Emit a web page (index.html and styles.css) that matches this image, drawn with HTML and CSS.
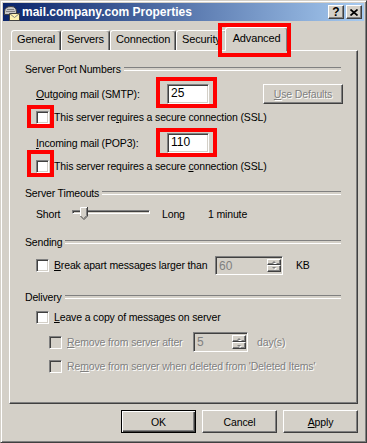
FILE: index.html
```html
<!DOCTYPE html>
<html>

<head>
    <title>mail.company.com Properties</title>
    <link rel="stylesheet" href="styles.css">
</head>

<body>
    <div class="window">
        <!-- Title bar -->
        <div class="titlebar">
            <svg class="app-icon" width="17" height="17" viewBox="0 0 17 17">
                <path d="M1.5 10.5V8Q1.5 2.5 8 2.5Q13.5 2.5 13.5 8V10.5Z" fill="#c8c8c8" stroke="#404040" />
                <path d="M4 5.5H11M3 7.5H12" stroke="#808080" />
                <rect x="6.5" y="9.5" width="10" height="7" fill="#fff4b0" stroke="#404040" />
                <path d="M6.5 9.5L11.5 13.5L16.5 9.5" fill="none" stroke="#808080" />
            </svg>
            <span class="title">mail.company.com Properties</span>
            <div class="caption-buttons">
                <span class="caption-btn">?</span>
                <span class="caption-btn">
                    <svg width="8" height="7" viewBox="0 0 8 7">
                        <path d="M0.5 0.5L7.5 6.5M7.5 0.5L0.5 6.5" stroke="#000" stroke-width="1.7" />
                    </svg>
                </span>
            </div>
        </div>

        <div class="dialog">
            <div class="tabs">
                <div class="tab">General</div>
                <div class="tab">Servers</div>
                <div class="tab">Connection</div>
                <div class="tab">Security</div>
                <div class="tab active">Advanced</div>
            </div>

            <div class="panel">
                <!-- Server Port Numbers -->
                <div class="group-title">Server Port Numbers</div>
                <div class="row row-field gap-7">
                    <span class="field-label"><u>O</u>utgoing mail (SMTP):</span>
                    <span class="field port">25</span>
                    <span class="button disabled use-defaults"><u>U</u>se Defaults</span>
                </div>
                <div class="row gap-6">
                    <span class="check"></span>
                    <span>This server re<u>q</u>uires a secure connection (SSL)</span>
                </div>
                <div class="row row-field gap-8">
                    <span class="field-label"><u>I</u>ncoming mail (POP3):</span>
                    <span class="field port">110</span>
                </div>
                <div class="row gap-6">
                    <span class="check"></span>
                    <span>This server requires a secure <u>c</u>onnection (SSL)</span>
                </div>

                <!-- Server Timeouts -->
                <div class="group-title gap-13">Server Timeouts</div>
                <div class="row row-slider gap-5">
                    <span class="slider-label">Short</span>
                    <div class="slider">
                        <div class="track"></div>
                        <svg class="thumb" width="8" height="13" viewBox="0 0 8 13">
                            <path d="M0 0H8V9L4 13L0 9Z" fill="#d4d0c8" />
                            <path d="M0.5 9V0.5H7" stroke="#fff" fill="none" />
                            <path d="M7.5 0V9L4 12.5L0.5 9" stroke="#404040" fill="none" />
                            <path d="M6.5 1V8.6L4 11.1" stroke="#808080" fill="none" />
                        </svg>
                    </div>
                    <span class="slider-long">Long</span>
                    <span>1 minute</span>
                </div>

                <!-- Sending -->
                <div class="group-title gap-12">Sending</div>
                <div class="row row-spin gap-6">
                    <span class="check"></span>
                    <span class="break-label"><u>B</u>reak apart messages larger than</span>
                    <span class="field spin disabled kb-spin">
                        <span class="spin-value">60</span>
                        <span class="spin-arrows">
                            <span class="spin-btn"><span class="arrow up"></span></span>
                            <span class="spin-btn"><span class="arrow down"></span></span>
                        </span>
                    </span>
                    <span class="unit-kb">KB</span>
                </div>

                <!-- Delivery -->
                <div class="group-title gap-15">Delivery</div>
                <div class="row gap-6">
                    <span class="check"></span>
                    <span><u>L</u>eave a copy of messages on server</span>
                </div>
                <div class="row row-spin sub disabled-text gap-8">
                    <span class="check disabled"></span>
                    <span class="remove-label"><u>R</u>emove from server after</span>
                    <span class="field spin disabled day-spin">
                        <span class="spin-value">5</span>
                        <span class="spin-arrows">
                            <span class="spin-btn"><span class="arrow up"></span></span>
                            <span class="spin-btn"><span class="arrow down"></span></span>
                        </span>
                    </span>
                    <span class="unit-days">day(s)</span>
                </div>
                <div class="row sub disabled-text gap-7">
                    <span class="check disabled"></span>
                    <span>Re<u>m</u>ove from server when deleted from 'Deleted Items'</span>
                </div>
            </div>

            <div class="buttons">
                <span class="button default">OK</span>
                <span class="button">Cancel</span>
                <span class="button"><u>A</u>pply</span>
            </div>
        </div>

        <!-- Red annotation boxes -->
        <div class="mark mark-tab"></div>
        <div class="mark mark-smtp"></div>
        <div class="mark mark-ssl1"></div>
        <div class="mark mark-pop3"></div>
        <div class="mark mark-ssl2"></div>
    </div>
</body>

</html>
```

FILE: styles.css
```css
* {
    margin: 0;
    padding: 0;
    box-sizing: border-box;
}

body {
    font-family: 'Liberation Sans', Arial, sans-serif;
    font-size: 10.5px;
    letter-spacing: -0.15px;
    color: #000000;
    background-color: #d4d0c8;
}

u {
    text-decoration: underline;
    text-underline-offset: 1px;
}

.window {
    position: relative;
    width: 367px;
    height: 443px;
    background: #d4d0c8;
    border: 1px solid;
    border-color: #d4d0c8 #404040 #404040 #d4d0c8;
    box-shadow: inset 1px 1px #ffffff, inset -1px -1px #808080;
    padding: 2px;
}

/* Title bar */
.titlebar {
    height: 18px;
    display: flex;
    align-items: center;
    padding: 0 2px 0 0;
    background: linear-gradient(to right, #0a246a, #a6caf0);
    color: #ffffff;
}

.app-icon {
    flex: none;
    margin-right: 2px;
}

.title {
    font-size: 12px;
    font-weight: bold;
    letter-spacing: 0;
}

.caption-buttons {
    margin-left: auto;
    display: flex;
    gap: 2px;
}

.caption-btn {
    width: 16px;
    height: 14px;
    display: flex;
    align-items: center;
    justify-content: center;
    background: #d4d0c8;
    color: #000000;
    font-size: 12px;
    font-weight: bold;
    letter-spacing: 0;
    border: 1px solid;
    border-color: #ffffff #404040 #404040 #ffffff;
    box-shadow: inset -1px -1px #808080;
}

/* Dialog body */
.dialog {
    padding: 6px 6px 0 6px;
}

.tabs {
    height: 23px;
    display: flex;
    align-items: flex-end;
    padding-left: 2px;
}

.tab {
    height: 20px;
    padding: 0 5px;
    line-height: 17px;
    font-size: 11px;
    border: 1px solid;
    border-bottom: none;
    border-color: #ffffff #404040 #404040 #ffffff;
    border-radius: 3px 3px 0 0;
    box-shadow: inset -1px 0 #808080;
    background: #d4d0c8;
}

.tab.active {
    position: relative;
    z-index: 1;
    height: 24px;
    margin: 0 -2px -1px -2px;
    padding: 0 7px;
    line-height: 20px;
}

.panel {
    height: 354px;
    border: 1px solid;
    border-color: #ffffff #404040 #404040 #ffffff;
    box-shadow: inset -1px -1px #808080;
    padding: 11px 16px 0 15px;
}

.group-title {
    height: 14px;
    display: flex;
    align-items: center;
}

.group-title::after {
    content: '';
    flex: 1;
    height: 2px;
    margin-left: 3px;
    border-top: 1px solid #808080;
    border-bottom: 1px solid #ffffff;
}

.row {
    height: 14px;
    display: flex;
    align-items: center;
    padding-left: 11px;
    white-space: nowrap;
}

.row.sub {
    padding-left: 24px;
}

.row-field {
    height: 21px;
}

.row-slider {
    height: 18px;
}

.row-spin {
    height: 20px;
}

.gap-5 { margin-top: 5px; }
.gap-6 { margin-top: 6px; }
.gap-7 { margin-top: 7px; }
.gap-8 { margin-top: 8px; }
.gap-12 { margin-top: 12px; }
.gap-13 { margin-top: 13px; }
.gap-15 { margin-top: 15px; }

.disabled-text {
    color: #808080;
    text-shadow: 1px 1px #ffffff;
}

/* Checkbox */
.check {
    flex: none;
    width: 13px;
    height: 13px;
    margin-right: 5px;
    background: #ffffff;
    border: 1px solid;
    border-color: #808080 #ffffff #ffffff #808080;
    box-shadow: inset 1px 1px #404040, inset -1px -1px #d4d0c8;
}

.check.disabled {
    background: #d4d0c8;
}

/* Edit fields */
.field-label {
    width: 131px;
}

.field {
    height: 20px;
    padding: 0 3px;
    line-height: 17px;
    font-size: 12px;
    letter-spacing: 0;
    background: #ffffff;
    border: 1px solid;
    border-color: #808080 #ffffff #ffffff #808080;
    box-shadow: inset 1px 1px #404040, inset -1px -1px #d4d0c8;
}

.field.port {
    width: 42px;
}

.field.disabled {
    background: #d4d0c8;
    color: #808080;
    text-shadow: none;
}

.field.spin {
    display: flex;
    padding: 2px 1px 2px 3px;
    line-height: 14px;
}

.kb-spin {
    width: 68px;
    height: 19px;
}

.day-spin {
    width: 55px;
}

.spin-value {
    flex: 1;
}

.spin-arrows {
    width: 14px;
    display: flex;
    flex-direction: column;
}

.spin-btn {
    flex: 1;
    display: flex;
    align-items: center;
    justify-content: center;
    border: 1px solid;
    border-color: #ffffff #404040 #404040 #ffffff;
    box-shadow: inset -1px -1px #808080;
}

.arrow {
    width: 0;
    height: 0;
    border-left: 2px solid transparent;
    border-right: 2px solid transparent;
    filter: drop-shadow(1px 1px 0 #ffffff);
}

.arrow.up {
    border-bottom: 2px solid #808080;
}

.arrow.down {
    border-top: 2px solid #808080;
}

.break-label {
    width: 161px;
}

.unit-kb {
    margin-left: 13px;
}

.remove-label {
    width: 126px;
}

.unit-days {
    margin-left: 9px;
}

/* Slider */
.slider-label {
    width: 36px;
}

.slider {
    position: relative;
    width: 78px;
    height: 18px;
    padding-top: 5px;
    margin-right: 12px;
}

.track {
    height: 4px;
    border: 1px solid;
    border-color: #808080 #ffffff #ffffff #808080;
    box-shadow: inset 1px 1px #404040;
}

.thumb {
    position: absolute;
    left: 8px;
    top: 2px;
}

.slider-long {
    width: 46px;
}

/* Push buttons */
.button {
    width: 75px;
    height: 23px;
    display: flex;
    align-items: center;
    justify-content: center;
    background: #d4d0c8;
    border: 1px solid;
    border-color: #ffffff #404040 #404040 #ffffff;
    box-shadow: inset -1px -1px #808080;
}

.button.default {
    border-color: #000000;
    box-shadow: inset 1px 1px #ffffff, inset -1px -1px #404040, inset -2px -2px #808080;
}

.button.disabled {
    color: #808080;
    text-shadow: 1px 1px #ffffff;
}

.use-defaults {
    width: 80px;
    height: 20px;
    margin-left: auto;
    margin-right: -2px;
}

.buttons {
    display: flex;
    justify-content: flex-end;
    gap: 6px;
    margin-top: 6px;
}

/* Red annotation boxes */
.mark {
    position: absolute;
    border: 4px solid #ff0000;
    z-index: 2;
}

.mark-tab { left: 217px; top: 22px; width: 73px; height: 34px; }
.mark-smtp { left: 155px; top: 76px; width: 61px; height: 31px; }
.mark-ssl1 { left: 26px; top: 104px; width: 27px; height: 23px; }
.mark-pop3 { left: 155px; top: 127px; width: 61px; height: 29px; }
.mark-ssl2 { left: 26px; top: 149px; width: 27px; height: 27px; }
```
